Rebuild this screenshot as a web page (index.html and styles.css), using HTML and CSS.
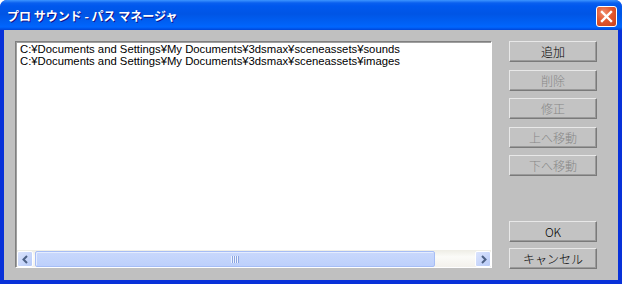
FILE: index.html
```html
<!DOCTYPE html>
<html>
<head>
  <meta charset="UTF-8">
  <title>プロ サウンド - パス マネージャ</title>
  <link rel="stylesheet" href="styles.css">
</head>
<body>
  <div class="window">
    <div class="titlebar">
      <span class="title">プロ サウンド - パス マネージャ</span>
      <button class="close" aria-label="閉じる">
        <svg width="13" height="13" viewBox="0 0 13 13">
          <path d="M2 2 L11 11 M11 2 L2 11" stroke="#fff" stroke-width="2.4" stroke-linecap="square"/>
        </svg>
      </button>
    </div>

    <div class="client">
      <!-- path list -->
      <div class="listbox">
        <div class="items">
          <div class="item">C:¥Documents and Settings¥My Documents¥3dsmax¥sceneassets¥sounds</div>
          <div class="item">C:¥Documents and Settings¥My Documents¥3dsmax¥sceneassets¥images</div>
        </div>
        <div class="hscroll">
          <div class="arrow">
            <svg width="9" height="9" viewBox="0 0 9 9"><path d="M6 1 L2.5 4.5 L6 8" fill="none" stroke="#4d6185" stroke-width="2"/></svg>
          </div>
          <div class="track">
            <div class="thumb">
              <span class="grip"></span>
            </div>
          </div>
          <div class="arrow">
            <svg width="9" height="9" viewBox="0 0 9 9"><path d="M3 1 L6.5 4.5 L3 8" fill="none" stroke="#4d6185" stroke-width="2"/></svg>
          </div>
        </div>
      </div>

      <!-- actions -->
      <div class="buttons">
        <div class="button-group top">
          <button class="btn">追加</button>
          <button class="btn" disabled>削除</button>
          <button class="btn" disabled>修正</button>
          <button class="btn" disabled>上へ移動</button>
          <button class="btn" disabled>下へ移動</button>
        </div>
        <div class="button-group">
          <button class="btn">OK</button>
          <button class="btn">キャンセル</button>
        </div>
      </div>
    </div>
  </div>
</body>
</html>
```

FILE: styles.css
```css
body {
  margin: 0;
  width: 622px;
  height: 284px;
  overflow: hidden;
  background: #fff;
  font-family: "Noto Sans CJK JP", "Liberation Sans", sans-serif;
}

.window {
  width: 622px;
  height: 284px;
  box-sizing: border-box;
  display: flex;
  flex-direction: column;
  background: #0831d9;
  border-radius: 7px 7px 0 0;
  overflow: hidden;
}

.titlebar {
  height: 30px;
  flex: none;
  display: flex;
  align-items: center;
  justify-content: space-between;
  padding: 0 5px 0 7px;
  background: linear-gradient(#3d95ff 0, #0a5fef 3px, #0058ee 6px, #0055e5 14px, #0062f7 24px, #0066ff 27px, #0046d8 30px);
}

.title {
  color: #fff;
  font-size: 12px;
  font-weight: bold;
  text-shadow: 1px 1px #0f1089;
  padding-top: 1px;
}

.close {
  width: 21px;
  height: 21px;
  padding: 0;
  border: 1px solid #fff;
  border-radius: 3px;
  background: radial-gradient(circle at 35% 30%, #f08d6e 0, #e2572e 45%, #c8401c 100%);
  display: flex;
  align-items: center;
  justify-content: center;
  margin-top: 3px;
}

.client {
  flex: 1;
  margin: 0 4px 4px 4px;
  background: #c0c0c0;
  display: flex;
  padding: 11px 20px 11px 11px;
  gap: 17px;
}

.listbox {
  width: 477px;
  margin-bottom: 1px;
  box-sizing: border-box;
  background: #fff;
  border: 1px solid;
  border-color: #808080 #fff #fff #808080;
  box-shadow: inset 1px 1px 0 #a0a0a0;
  display: flex;
  flex-direction: column;
}

.items {
  flex: 1;
  padding: 1px 0 0 4px;
}

.item {
  font-family: "Liberation Sans", sans-serif;
  font-size: 11.3px;
  line-height: 12px;
  color: #000;
  white-space: nowrap;
}

.hscroll {
  height: 17px;
  display: flex;
  margin: 0 0 0 1px;
  background: linear-gradient(#eeede5, #fbfbf8 40%, #f3f1ec);
}

.arrow {
  width: 16px;
  height: 16px;
  margin-top: 1px;
  box-sizing: border-box;
  border: 1px solid #fff;
  border-radius: 2px;
  background: linear-gradient(135deg, #dbe4fd, #b8cbf8);
  display: flex;
  align-items: center;
  justify-content: center;
}

.track {
  flex: 1;
  padding: 1px 40px 0 2px;
}

.thumb {
  height: 16px;
  box-sizing: border-box;
  border: 1px solid #a6bdf5;
  border-radius: 2px;
  background: linear-gradient(#c9d8fc, #bdd0fb);
  box-shadow: inset 1px 1px 0 #e4ecfe;
  display: flex;
  align-items: center;
  justify-content: center;
}

.grip {
  width: 8px;
  height: 7px;
  background: repeating-linear-gradient(90deg, #eef3fe 0, #eef3fe 1px, #8ca5e0 1px, #8ca5e0 2px);
}

.buttons {
  width: 88px;
  display: flex;
  flex-direction: column;
  justify-content: space-between;
}

.button-group {
  display: flex;
  flex-direction: column;
  gap: 6px;
}

.button-group.top {
  gap: 7.5px;
}

.btn {
  height: 21px;
  padding: 0;
  font-family: "Noto Sans CJK JP", "Liberation Sans", sans-serif;
  font-size: 12px;
  font-weight: 300;
  line-height: 19px;
  color: #000;
  background: #c3c3c3;
  border: 1px solid;
  border-color: #e8e8e8 #7a7a7a #7a7a7a #e8e8e8;
  box-shadow: inset -1px -1px 0 #9a9a9a;
}

.btn:disabled {
  color: #878787;
}
```
